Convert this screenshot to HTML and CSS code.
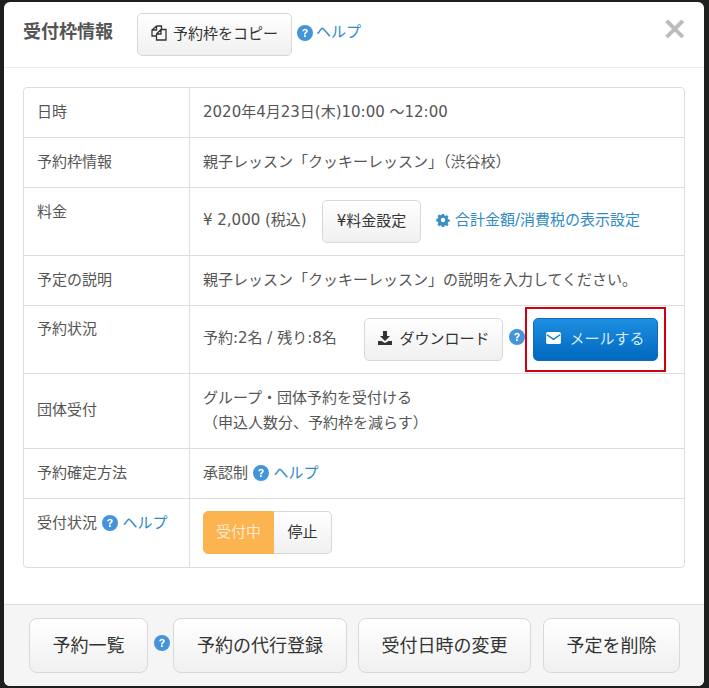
FILE: index.html
```html
<!DOCTYPE html>
<html lang="ja">

<head>
    <meta charset="UTF-8">
    <title>受付枠情報</title>
    <link rel="stylesheet" href="styles.css">
</head>

<body>
    <svg class="icon-defs" width="0" height="0">
        <symbol id="i-help" viewBox="0 0 16 16">
            <circle cx="8" cy="8" r="8" fill="#4494dc"></circle>
            <path d="M5.2 6.200C5.300 4.700 6.500 3.800 8 3.800c1.700 0 2.800.9 2.800 2.300 0 1.100-.7 1.700-1.400 2.100-.6.4-.8.6-.8 1.300H7c0-1.200.4-1.800 1.100-2.300.6-.4 1-.6 1-1.100 0-.5-.5-.8-1.100-.8-.7 0-1.100.4-1.200 1z" fill="#fff"></path>
            <rect x="7" y="10.200" width="1.800" height="1.800" fill="#fff"></rect>
        </symbol>
        <symbol id="i-gear" viewBox="0 0 16 16">
            <path fill-rule="evenodd" d="M6.700 1h2.600l.4 1.900 1.100.5 1.700-1 1.800 1.800-1 1.700.5 1.100 1.900.4v2.600l-1.900.4-.5 1.100 1 1.700-1.800 1.800-1.700-1-1.100.5-.4 1.900H6.700l-.4-1.900-1.100-.5-1.700 1-1.800-1.800 1-1.700-.5-1.100L.3 9.300V6.700l1.900-.4.5-1.100-1-1.700 1.800-1.800 1.700 1 1.100-.5zM8 5.500a2.500 2.500 0 1 0 0 5 2.500 2.500 0 0 0 0-5z" fill="#3a8fc7"></path>
        </symbol>
        <symbol id="i-copy" viewBox="0 0 16 16">
            <path d="M5.500 1h5v3.500M5.500 1L1 5v6h4.500M1 5h4.500V1" fill="none" stroke="#333" stroke-width="1.300"></path>
            <path d="M10 4.500h5V15H5.500V9zM10 4.500V9H5.500" fill="none" stroke="#333" stroke-width="1.300"></path>
        </symbol>
        <symbol id="i-download" viewBox="0 0 16 16">
            <path d="M6 1h4v5h3L8 11 3 6h3zM1 11h3.500L8 13l3.500-2H15v4H1z" fill="#333"></path>
        </symbol>
        <symbol id="i-mail" viewBox="0 0 16 13">
            <rect width="16" height="13" rx="2" fill="#fff"></rect>
            <path d="M.8 3l7.200 5 7.200-5" fill="none" stroke="#0f78cc" stroke-width="1.400"></path>
        </symbol>
    </svg>

    <div class="modal">
        <!-- ヘッダー -->
        <div class="modal-header">
            <h3>受付枠情報</h3>
            <button class="btn btn-copy">
                <svg class="icon"><use href="#i-copy"></use></svg>予約枠をコピー
            </button>
            <svg class="help-icon"><use href="#i-help"></use></svg>
            <a class="link" href="#">ヘルプ</a>
            <span class="close">×</span>
        </div>

        <div class="modal-body">
            <table class="info-table">
                <tr class="row-date">
                    <th class="middle">日時</th>
                    <td>2020年4月23日(木)10:00 ～12:00</td>
                </tr>
                <tr class="row-name">
                    <th class="middle">予約枠情報</th>
                    <td>親子レッスン「クッキーレッスン」（渋谷校）</td>
                </tr>
                <tr class="row-price">
                    <th>料金</th>
                    <td>
                        <div class="cell-line">
                            <span class="price">¥ 2,000 (税込)</span>
                            <button class="btn btn-price">¥料金設定</button>
                            <svg class="gear-icon"><use href="#i-gear"></use></svg>
                            <a class="link" href="#">合計金額/消費税の表示設定</a>
                        </div>
                    </td>
                </tr>
                <tr class="row-desc">
                    <th class="middle">予定の説明</th>
                    <td>親子レッスン「クッキーレッスン」の説明を入力してください。</td>
                </tr>
                <tr class="row-status">
                    <th>予約状況</th>
                    <td>
                        <div class="cell-line">
                            <span class="count">予約:2名 / 残り:8名</span>
                            <button class="btn btn-download">
                                <svg class="icon"><use href="#i-download"></use></svg>ダウンロード
                            </button>
                            <svg class="help-icon"><use href="#i-help"></use></svg>
                            <span class="mail-wrap">
                                <button class="btn btn-mail">
                                    <svg class="icon-mail"><use href="#i-mail"></use></svg>メールする
                                </button>
                            </span>
                        </div>
                    </td>
                </tr>
                <tr class="row-group">
                    <th class="middle">団体受付</th>
                    <td class="group-text">グループ・団体予約を受付ける<br>（申込人数分、予約枠を減らす）</td>
                </tr>
                <tr class="row-confirm">
                    <th class="middle">予約確定方法</th>
                    <td>承認制 <svg class="help-icon"><use href="#i-help"></use></svg> <a class="link" href="#">ヘルプ</a></td>
                </tr>
                <tr class="row-accept">
                    <th>受付状況 <svg class="help-icon"><use href="#i-help"></use></svg> <a class="link" href="#">ヘルプ</a></th>
                    <td>
                        <div class="btn-group">
                            <button class="btn btn-on">受付中</button>
                            <button class="btn btn-off">停止</button>
                        </div>
                    </td>
                </tr>
            </table>
        </div>

        <!-- フッター -->
        <div class="modal-footer">
            <button class="btn btn-large btn-list">予約一覧</button>
            <svg class="help-icon"><use href="#i-help"></use></svg>
            <button class="btn btn-large btn-proxy">予約の代行登録</button>
            <button class="btn btn-large btn-change">受付日時の変更</button>
            <button class="btn btn-large btn-delete">予定を削除</button>
        </div>
    </div>
</body>

</html>
```

FILE: styles.css
```css
body {
    margin: 0;
    height: 688px;
    overflow: hidden;
    background-color: #1d1f1f;
    font-family: "DejaVu Sans", "Noto Sans CJK JP", sans-serif;
    font-size: 15px;
    color: #555;
}

.icon-defs {
    display: block;
}

.modal {
    width: 700px;
    height: 684px;
    margin: 2px 0 0 4px;
    background-color: #fff;
    border-radius: 6px;
    display: flex;
    flex-direction: column;
    overflow: hidden;
}

.modal-header {
    height: 66px;
    box-sizing: border-box;
    border-bottom: 1px solid #eee;
    padding: 11px 16px 0 19px;
    display: flex;
    align-items: flex-start;
}

.modal-header h3 {
    width: 114px;
    flex: none;
    margin: 8px 0 0;
    font-size: 18px;
    line-height: 22px;
    color: #555;
}

.modal-header .help-icon {
    margin: 12px 3px 0 5px;
}

.modal-header .link {
    margin-top: 8px;
    line-height: 22px;
}

.close {
    margin-left: auto;
    margin-top: -1px;
    font-size: 32px;
    line-height: 32px;
    font-weight: bold;
    color: #bbb;
}

.modal-body {
    flex: 1;
    padding: 19px 19px 0;
}

.info-table {
    width: 662px;
    box-sizing: border-box;
    border-collapse: separate;
    border-spacing: 0;
    border: 1px solid #ddd;
    border-radius: 4px;
    line-height: 20px;
    table-layout: fixed;
}

.info-table th,
.info-table td {
    padding: 13px 13px 15px;
    border-top: 1px solid #ddd;
    text-align: left;
    vertical-align: top;
    font-weight: normal;
}

.info-table tr:first-child th,
.info-table tr:first-child td {
    border-top: none;
}

.info-table th {
    width: 139px;
}

.info-table td {
    border-left: 1px solid #ddd;
}

.info-table th.middle,
.info-table td {
    vertical-align: middle;
}

.row-date th { height: 21px; }
.row-name th { height: 21px; }
.row-desc th { height: 21px; }
.row-confirm th { height: 21px; }
.row-group th { height: 46px; }

.info-table .group-text {
    line-height: 25px;
    padding: 11px 13px 12px;
}

.info-table .row-price th,
.info-table .row-accept th {
    padding-top: 14px;
}

.info-table .row-price td,
.info-table .row-status td,
.info-table .row-accept td {
    padding-top: 12px;
    padding-bottom: 12px;
}

.info-table .row-accept td {
    padding-bottom: 13px;
}

.cell-line {
    display: flex;
    align-items: center;
}

.price {
    width: 119px;
    flex: none;
    margin-bottom: 4px;
}

.count {
    width: 161px;
    flex: none;
    margin-bottom: 4px;
}

.cell-line .link {
    margin-bottom: 4px;
}

.link {
    color: #2f8ac6;
    text-decoration: none;
}

.help-icon {
    width: 16px;
    height: 16px;
    vertical-align: -3px;
    flex: none;
}

.gear-icon {
    width: 14px;
    height: 14px;
    flex: none;
    margin: 0 5px 4px 15px;
}

.btn {
    box-sizing: border-box;
    height: 43px;
    padding: 0 8px 4px;
    font-family: inherit;
    font-size: 15px;
    color: #333;
    background: linear-gradient(#fff, #f0f0f0);
    border: 1px solid #d8d8d8;
    border-radius: 5px;
    display: inline-flex;
    align-items: center;
    justify-content: center;
    flex: none;
}

.icon {
    width: 16px;
    height: 16px;
    margin-right: 6px;
}

.btn-copy {
    width: 155px;
}

.btn-price {
    width: 99px;
}

.btn-download {
    width: 139px;
}

.row-status .help-icon {
    margin: 0 8px 6px 6px;
}

.mail-wrap {
    position: relative;
    display: flex;
}

/* 赤枠 */
.mail-wrap::after {
    content: "";
    position: absolute;
    left: -8px;
    right: -8px;
    top: -11px;
    bottom: -11px;
    border: 2px solid #d0000f;
    pointer-events: none;
}

.btn-mail {
    width: 125px;
    color: #dbeafa;
    background: linear-gradient(#1d8fe0, #0068c0);
    border: 1px solid #0f6cba;
}

.icon-mail {
    width: 15px;
    height: 12px;
    margin-right: 8px;
}

.btn-group {
    display: flex;
}

.btn-on {
    width: 71px;
    color: #fde9cf;
    background: #fbb450;
    border-color: #fbb450;
    border-radius: 5px 0 0 5px;
}

.btn-off {
    width: 58px;
    border-left: none;
    border-radius: 0 5px 5px 0;
}

.modal-footer {
    height: 82px;
    box-sizing: border-box;
    border-top: 1px solid #ddd;
    background-color: #f5f5f5;
    padding: 13px 0 0 25px;
    display: flex;
    align-items: flex-start;
}

.modal-footer .help-icon {
    margin: 17px 3px 0 6px;
}

.btn-large {
    height: 55px;
    font-size: 18px;
    border-radius: 8px;
}

.btn-list { width: 119px; }
.btn-proxy { width: 174px; margin-right: 11px; }
.btn-change { width: 173px; margin-right: 12px; }
.btn-delete { width: 137px; }
```
